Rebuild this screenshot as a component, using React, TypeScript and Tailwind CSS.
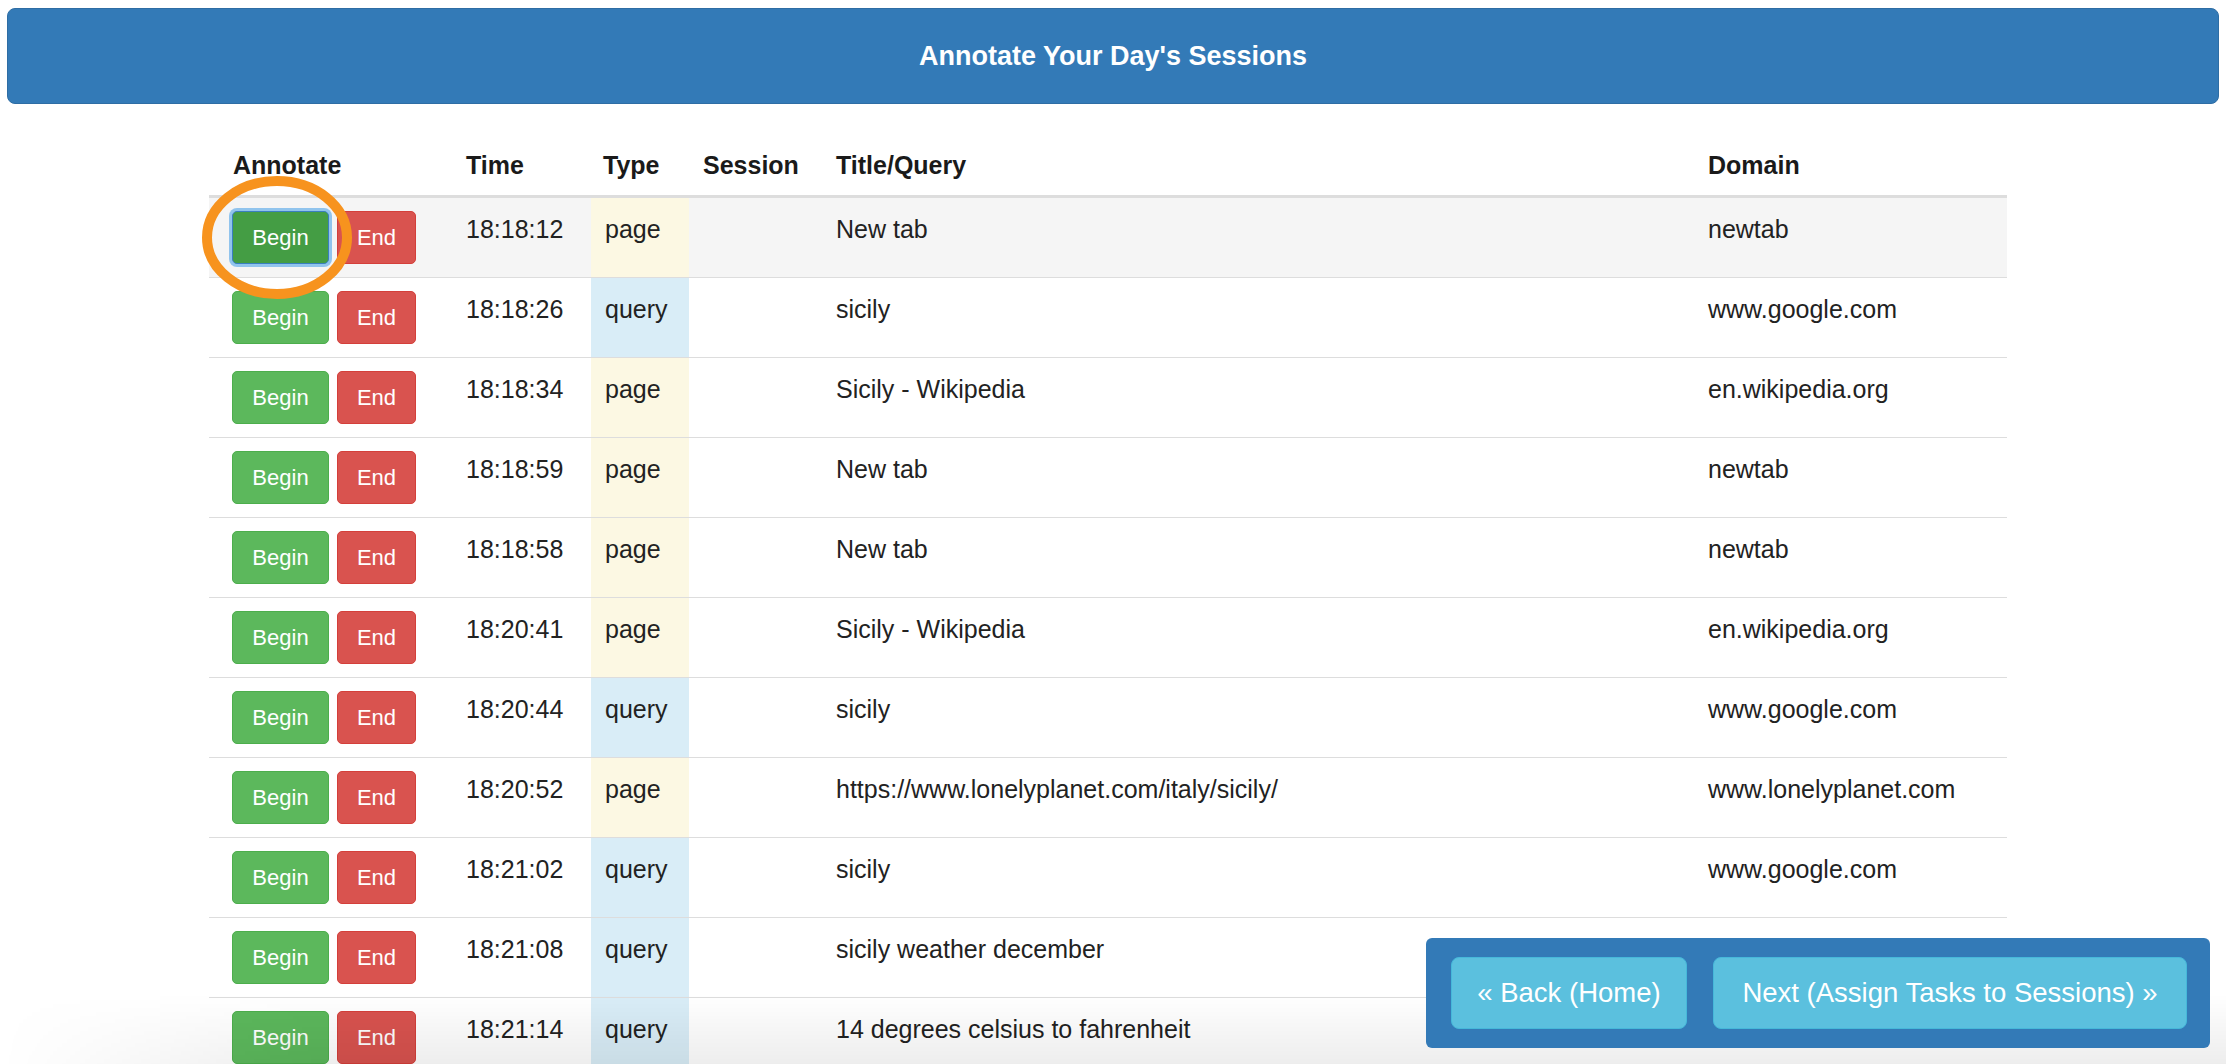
import React from "react";

type Row = {
  time: string;
  type: "page" | "query";
  title: string;
  domain: string;
};

const rows: Row[] = [
  { time: "18:18:12", type: "page", title: "New tab", domain: "newtab" },
  { time: "18:18:26", type: "query", title: "sicily", domain: "www.google.com" },
  { time: "18:18:34", type: "page", title: "Sicily - Wikipedia", domain: "en.wikipedia.org" },
  { time: "18:18:59", type: "page", title: "New tab", domain: "newtab" },
  { time: "18:18:58", type: "page", title: "New tab", domain: "newtab" },
  { time: "18:20:41", type: "page", title: "Sicily - Wikipedia", domain: "en.wikipedia.org" },
  { time: "18:20:44", type: "query", title: "sicily", domain: "www.google.com" },
  {
    time: "18:20:52",
    type: "page",
    title: "https://www.lonelyplanet.com/italy/sicily/",
    domain: "www.lonelyplanet.com",
  },
  { time: "18:21:02", type: "query", title: "sicily", domain: "www.google.com" },
  { time: "18:21:08", type: "query", title: "sicily weather december", domain: "www.google.com" },
  { time: "18:21:14", type: "query", title: "14 degrees celsius to fahrenheit", domain: "www.google.com" },
];

const textCell = "pl-[14px] pt-[13px] align-top leading-[36px]";

function AnnotateButtons({ focused }: { focused: boolean }) {
  return (
    <div className="flex gap-[8px]">
      <button
        className={
          focused
            ? "h-[53px] w-[97px] rounded-[5px] border border-[#3a7fbf] bg-[#449d44] text-[22px] text-white shadow-[0_0_0_3px_rgba(102,175,233,0.7)]"
            : "h-[53px] w-[97px] rounded-[5px] border border-[#4cae4c] bg-[#5cb85c] text-[22px] text-white"
        }
      >
        Begin
      </button>
      <button className="h-[53px] w-[79px] rounded-[5px] border border-[#d43f3a] bg-[#d9534f] text-[22px] text-white">
        End
      </button>
    </div>
  );
}

export default function App() {
  return (
    <div className="relative h-screen overflow-hidden bg-white font-['Liberation_Sans',Arial,Helvetica,sans-serif] text-[25px] text-[#333]">
      <div className="px-[7px] pt-[8px]">
        <div className="flex h-[96px] items-center justify-center rounded-[8px] border border-[#2e6da4] bg-[#337ab7] text-[27px] font-bold text-white">
          Annotate Your Day&apos;s Sessions
        </div>
      </div>

      <table className="ml-[209px] mt-[30px] w-[1798px] table-fixed border-collapse">
        <colgroup>
          <col className="w-[243px]" />
          <col className="w-[139px]" />
          <col className="w-[98px]" />
          <col className="w-[133px]" />
          <col className="w-[872px]" />
          <col className="w-[313px]" />
        </colgroup>
        <thead>
          <tr className="border-b-[3px] border-[#ddd] text-left font-bold text-[#1a1a1a]">
            <th className="pb-[12px] pl-[24px] pt-[13px] leading-[36px]">Annotate</th>
            <th className="pb-[12px] pl-[14px] pt-[13px] leading-[36px]">Time</th>
            <th className="pb-[12px] pl-[12px] pt-[13px] leading-[36px]">Type</th>
            <th className="pb-[12px] pl-[14px] pt-[13px] leading-[36px]">Session</th>
            <th className="pb-[12px] pl-[14px] pt-[13px] leading-[36px]">Title/Query</th>
            <th className="pb-[12px] pl-[14px] pt-[13px] leading-[36px]">Domain</th>
          </tr>
        </thead>
        <tbody>
          {rows.map((row, i) => (
            <tr
              key={i}
              className={
                i === 0 ? "border-b border-[#ddd] bg-[#f5f5f5] text-[#222]" : "border-b border-[#ddd] text-[#222]"
              }
            >
              <td className="py-[13px] pl-[23px] align-top">
                <AnnotateButtons focused={i === 0} />
              </td>
              <td className={textCell}>{row.time}</td>
              <td className={row.type === "page" ? `${textCell} bg-[#fcf8e3]` : `${textCell} bg-[#d9edf7]`}>
                {row.type}
              </td>
              <td className={textCell}></td>
              <td className={textCell}>{row.title}</td>
              <td className={textCell}>{row.domain}</td>
            </tr>
          ))}
        </tbody>
      </table>

      {/* highlight ring around the first Begin button */}
      <svg
        className="pointer-events-none absolute left-[202px] top-[176px]"
        width="150"
        height="123"
        viewBox="0 0 150 123"
      >
        <ellipse cx="75" cy="61.5" rx="70" ry="56.5" fill="none" stroke="#f7931e" strokeWidth="10" />
      </svg>

      <div className="pointer-events-none absolute bottom-0 left-0 right-0 h-[70px] bg-gradient-to-b from-transparent to-black/[0.07] [mask-image:linear-gradient(to_right,transparent,black_320px)]" />

      <div className="absolute bottom-[16px] right-[16px] flex gap-[26px] rounded-[6px] bg-[#337ab7] pb-[19px] pl-[25px] pr-[23px] pt-[19px]">
        <button className="h-[72px] w-[236px] rounded-[8px] border border-[#46b8da] bg-[#5bc0de] text-[27.5px] text-white">
          « Back (Home)
        </button>
        <button className="h-[72px] w-[474px] rounded-[8px] border border-[#46b8da] bg-[#5bc0de] text-[27.5px] text-white">
          Next (Assign Tasks to Sessions) »
        </button>
      </div>
    </div>
  );
}
